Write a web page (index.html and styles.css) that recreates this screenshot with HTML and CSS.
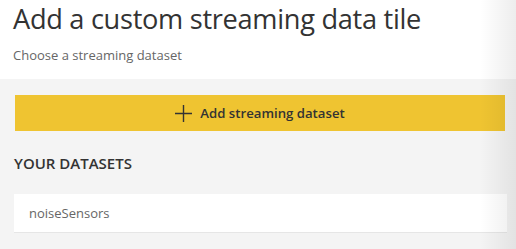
FILE: index.html
```html
<!DOCTYPE html>
<html>
<head>
<meta charset="utf-8">
<link rel="stylesheet" href="styles.css">
</head>
<body>
<div class="page">
  <header class="head">
    <h1 class="title">Add a custom streaming data tile</h1>
    <p class="subtitle">Choose a streaming dataset</p>
  </header>
  <main class="body">
    <button class="add-btn">
      <svg class="plus" width="17" height="17" viewBox="0 0 17 17"><path d="M8.5 0V17M0 8.5H17" stroke="#333" stroke-width="1.4" fill="none"/></svg>
      <span>Add streaming dataset</span>
    </button>
    <h2 class="section">YOUR DATASETS</h2>
    <div class="card">noiseSensors</div>
  </main>
  <div class="edge-shade"></div>
</div>
</body>
</html>
```
FILE: styles.css
```css
html, body { margin: 0; padding: 0; }
body {
  width: 516px;
  height: 249px;
  overflow: hidden;
  background: #f4f4f4;
  font-family: "Open Sans", "Noto Sans", sans-serif;
  color: #333;
}
.page { position: relative; width: 516px; height: 249px; }
.head {
  background: #fff;
  height: 79px;
  padding: 0 0 0 13px;
  box-sizing: border-box;
}
.title {
  margin: 0;
  font-size: 27.2px;
  font-weight: 400;
  line-height: 38px;
  color: #333;
  letter-spacing: -0.3px;
}
.subtitle {
  margin: 8px 0 0;
  font-size: 13px;
  line-height: 18px;
  color: #666;
}
.body { padding: 16px 11px 0 14px; }
.add-btn {
  display: flex;
  align-items: center;
  justify-content: center;
  gap: 8px;
  width: 490px;
  height: 36px;
  margin-left: 1px;
  border: 0;
  background: #efc431;
  font-family: inherit;
  font-size: 13.2px;
  font-weight: 600;
  color: #333;
  padding: 0;
}
.section {
  margin: 22px 0 0;
  font-size: 15px;
  font-weight: 600;
  line-height: 20px;
  color: #333;
}
.card {
  margin-top: 21px;
  width: 493px;
  height: 39px;
  box-sizing: border-box;
  background: #fff;
  border-bottom: 1px solid #e6e6e6;
  padding: 0 0 0 15px;
  display: flex;
  align-items: center;
  font-size: 13px;
  color: #666;
}
.edge-shade {
  position: absolute;
  top: 0; right: 0;
  width: 36px; height: 249px;
  background: linear-gradient(to right, rgba(0,0,0,0), rgba(0,0,0,0.07));
  pointer-events: none;
}
```
